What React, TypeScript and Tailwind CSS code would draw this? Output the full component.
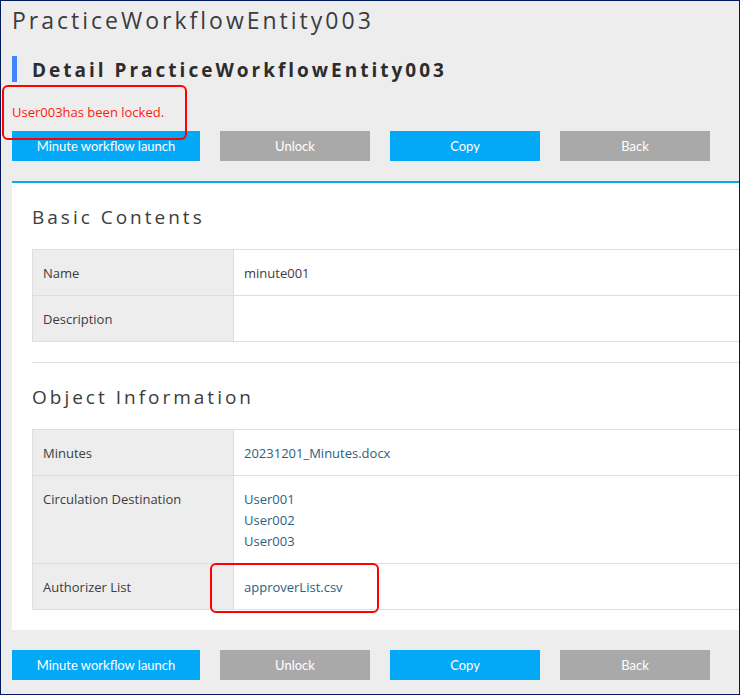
import type { ReactNode } from "react";

const actions = [
  { label: "Minute workflow launch", className: "w-[188px] bg-[#03a9f7]" },
  { label: "Unlock", className: "w-[150px] bg-[#a9a9a9]" },
  { label: "Copy", className: "w-[150px] bg-[#03a9f7]" },
  { label: "Back", className: "w-[150px] bg-[#a9a9a9]" },
];

function ActionBar() {
  return (
    <div className="flex gap-x-5 pl-[11px]">
      {actions.map((action) => (
        <button
          key={action.label}
          type="button"
          className={`h-[30px] shrink-0 text-center font-['Lato','Open_Sans',sans-serif] text-[13px] leading-[30px] text-white ${action.className}`}
        >
          {action.label}
        </button>
      ))}
    </div>
  );
}

function SectionHeading({ children }: { children: ReactNode }) {
  return (
    <h3 className="h-[66px] pt-5 text-[19px] leading-7 tracking-[3px] text-[#3c3c3c]">
      {children}
    </h3>
  );
}

function Row({ label, children }: { label: string; children?: ReactNode }) {
  return (
    <tr className="border-y border-[#dedede]">
      <th
        scope="row"
        className="w-[201px] border-x border-[#dedede] bg-[#ededed] px-2.5 pt-[13px] pb-[11px] text-left align-top font-normal"
      >
        {label}
      </th>
      <td className="px-2.5 pt-[13px] pb-[11px] align-top">{children}</td>
    </tr>
  );
}

function ItemLink({ children }: { children: ReactNode }) {
  return (
    <a href="#" className="text-[#2b617f]">
      {children}
    </a>
  );
}

const tableClass =
  "w-full table-fixed border-collapse text-[13px] leading-[21px] text-[#3c3c3c]";

export default function App() {
  return (
    <div className="overflow-hidden border border-[#001a5c] bg-[#ededed] pb-3.5 font-['Open_Sans','Noto_Sans',sans-serif] text-[#333]">
      <h1 className="h-[55px] pt-[3px] pl-[11px] text-[23px] leading-8 font-normal tracking-[3px] whitespace-nowrap text-[#3c3c3c]">
        PracticeWorkflowEntity003
      </h1>
      <h2 className="ml-[11px] h-[26px] border-l-[5px] border-[#4285ff] pl-[15px] text-[19px] leading-7 font-bold tracking-[3px] whitespace-nowrap text-[#2c2c2c]">
        Detail PracticeWorkflowEntity003
      </h2>
      <div className="relative h-[49px] pt-5 pl-[11px]">
        <p role="alert" className="text-[13px] leading-[21px] text-[#ff1a10]">
          User003has been locked.
        </p>
        <div className="pointer-events-none absolute top-[3px] left-px h-[55px] w-[185px] rounded-md border-2 border-[#ff0000]" />
      </div>
      <ActionBar />
      <main className="mt-5 mb-5 ml-[11px] border-t-2 border-[#03a9f7] bg-white pb-5 pl-5">
        <section>
          <SectionHeading>Basic Contents</SectionHeading>
          <table className={tableClass}>
            <tbody>
              <Row label="Name">minute001</Row>
              <Row label="Description" />
            </tbody>
          </table>
        </section>
        <section className="mt-5 border-t border-[#dedede]">
          <SectionHeading>Object Information</SectionHeading>
          <div className="relative">
            <table className={tableClass}>
              <tbody>
                <Row label="Minutes">
                  <ItemLink>20231201_Minutes.docx</ItemLink>
                </Row>
                <Row label="Circulation Destination">
                  <ul>
                    <li><ItemLink>User001</ItemLink></li>
                    <li><ItemLink>User002</ItemLink></li>
                    <li><ItemLink>User003</ItemLink></li>
                  </ul>
                </Row>
                <Row label="Authorizer List">
                  <ItemLink>approverList.csv</ItemLink>
                </Row>
              </tbody>
            </table>
            <div className="pointer-events-none absolute -bottom-[3px] left-[178px] h-[50px] w-[169px] rounded-md border-2 border-[#ff0000]" />
          </div>
        </section>
      </main>
      <ActionBar />
    </div>
  );
}
